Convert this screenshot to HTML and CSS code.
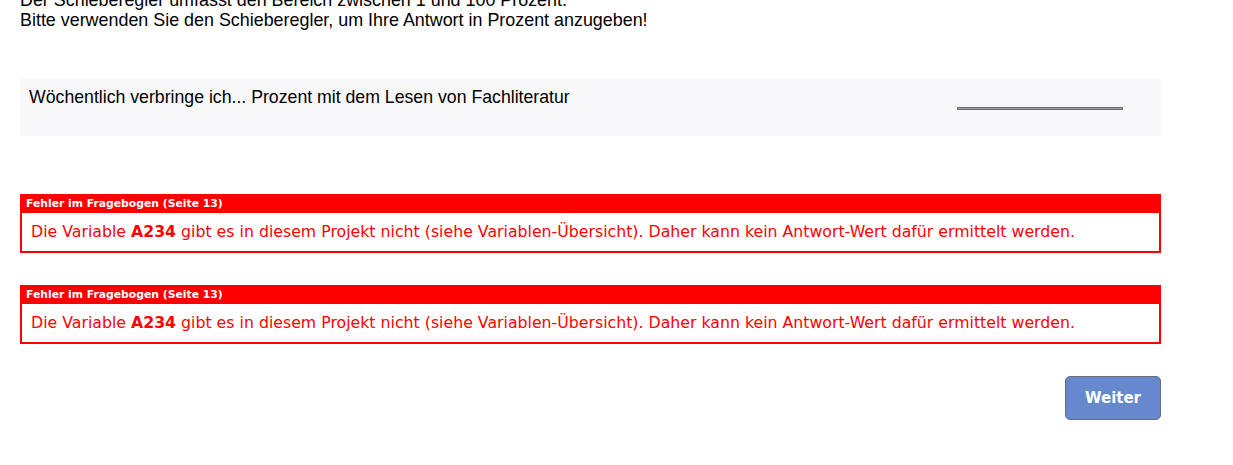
FILE: index.html
```html
<!DOCTYPE html>
<html lang="de">
<head>
<meta charset="utf-8">
<link rel="stylesheet" href="styles.css">
</head>
<body>
<div class="page">
  <div class="intro">
    <p>Der Schieberegler umfasst den Bereich zwischen 1 und 100 Prozent.</p>
    <p>Bitte verwenden Sie den Schieberegler, um Ihre Antwort in Prozent anzugeben!</p>
  </div>
  <div class="question">
    <div class="qtext">Wöchentlich verbringe ich... Prozent mit dem Lesen von Fachliteratur</div>
    <div class="slider"></div>
  </div>
  <div class="error">
    <div class="error-head">Fehler im Fragebogen (Seite 13)</div>
    <div class="error-body">Die Variable <b>A234</b> gibt es in diesem Projekt nicht (siehe Variablen-Übersicht). Daher kann kein Antwort-Wert dafür ermittelt werden.</div>
  </div>
  <div class="error">
    <div class="error-head">Fehler im Fragebogen (Seite 13)</div>
    <div class="error-body">Die Variable <b>A234</b> gibt es in diesem Projekt nicht (siehe Variablen-Übersicht). Daher kann kein Antwort-Wert dafür ermittelt werden.</div>
  </div>
  <div class="actions">
    <button class="next">Weiter</button>
  </div>
</div>
</body>
</html>
```
FILE: styles.css
```css
html, body {
  margin: 0;
  padding: 0;
  background: #fff;
  overflow: hidden;
}
.page {
  width: 1141px;
  margin: -10px 0 0 20px;
  font-family: "Liberation Sans", Arial, sans-serif;
  font-size: 17.9px;
  color: #000;
}
.intro p {
  margin: 0;
  line-height: 20px;
}
.question {
  margin-top: 49px;
  background: #f8f8fa;
  height: 57px;
  display: flex;
  justify-content: space-between;
  align-items: flex-start;
}
.qtext {
  padding: 9px 0 0 9px;
  line-height: 18px;
  font-size: 17.7px;
}
.slider {
  margin: 28px 38px 0 0;
  width: 164px;
  height: 1px;
  background: #a0a0a0;
  border: 1px solid #6c6c6c;
}
.error {
  margin-top: 58px;
  border: 2px solid #ff0000;
  height: 55px;
}
.error + .error {
  margin-top: 32px;
}
.error-head {
  background: #ff0000;
  color: #fff;
  font-family: "DejaVu Sans", Verdana, sans-serif;
  font-weight: bold;
  font-size: 10.8px;
  line-height: 16px;
  padding: 0 0 1px 4px;
}
.error-body {
  color: #ff0000;
  font-family: "DejaVu Sans", Verdana, sans-serif;
  font-size: 15.75px;
  padding: 10px 0 0 9px;
  line-height: 18px;
}
.actions {
  margin-top: 32px;
  display: flex;
  justify-content: flex-end;
}
.next {
  width: 96px;
  height: 44px;
  background: #6688cc;
  border: 1px solid #666c80;
  border-radius: 5px;
  color: #fff;
  font-family: "DejaVu Sans", Verdana, sans-serif;
  font-weight: bold;
  font-size: 15px;
}
```
